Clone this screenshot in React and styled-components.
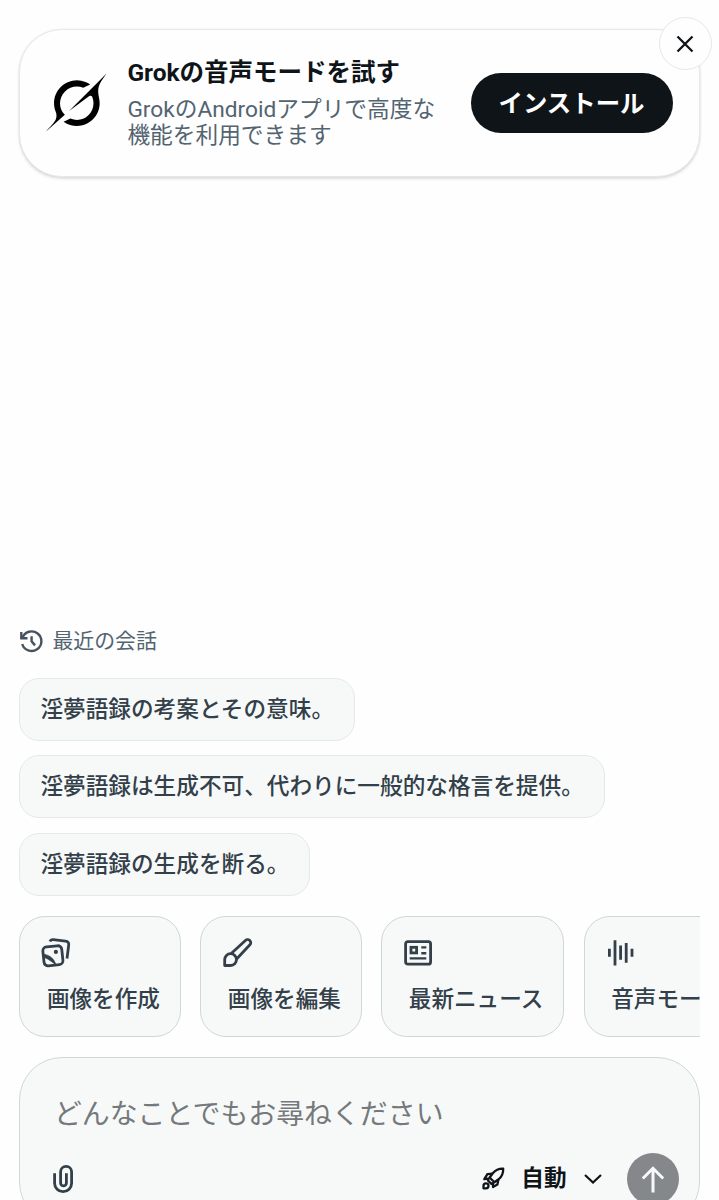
import styled, { createGlobalStyle } from 'styled-components';

const GlobalStyle = createGlobalStyle`
  * {
    box-sizing: border-box;
  }
  body {
    margin: 0;
    background: #fefefe;
    font-family: Roboto, "Noto Sans CJK JP", sans-serif;
    color: #0f1419;
  }
  button {
    font-family: inherit;
    color: inherit;
    padding: 0;
    border: 0;
    background: none;
  }
  svg {
    display: block;
    flex: none;
  }
`

const Page = styled.div`
  display: flex;
  flex-direction: column;
  height: 1200px;
  padding: 29px 19.5px 0 19.4px;
  overflow: hidden;
`

const Banner = styled.section`
  position: relative;
  display: flex;
  align-items: center;
  flex: none;
  height: 148px;
  padding: 0 26px;
  border: 1.5px solid #e6eaeb;
  border-radius: 43px;
  background: #fefefe;
  box-shadow: 0 2px 3px rgba(0, 0, 0, 0.12), 0 0 2px rgba(0, 0, 0, 0.08);
`

const BannerText = styled.div`
  flex: 1;
  margin: 0 16px 0 20px;
`

const BannerTitle = styled.h1`
  margin: -1px 0 9px;
  font-size: 24.5px;
  font-weight: 700;
  line-height: 31px;
`

const BannerDesc = styled.p`
  margin: 0;
  font-size: 22.7px;
  line-height: 26px;
  color: #536471;
`

const InstallButton = styled.button`
  flex: none;
  width: 202px;
  height: 60px;
  padding-bottom: 4px;
  border-radius: 30px;
  background: #0f1419;
  color: #fff;
  font-size: 24.4px;
  font-weight: 700;
`

const CloseButton = styled.button`
  position: absolute;
  top: -13px;
  right: -13px;
  display: flex;
  align-items: center;
  justify-content: center;
  width: 53px;
  height: 53px;
  border: 1px solid #e3e8ea;
  border-radius: 50%;
  background: #fefefe;
`

const Bottom = styled.main`
  flex: none;
  margin-top: 449px;
`

const RecentLabel = styled.div`
  display: flex;
  align-items: center;
  gap: 8px;
  height: 30px;
  font-size: 20.9px;
  line-height: 30px;
  color: #536471;

  svg {
    color: #46535e;
  }
`

const ChipList = styled.div`
  display: flex;
  flex-direction: column;
  align-items: flex-start;
  gap: 14.4px;
  margin-top: 22px;
`

const Chip = styled.button`
  height: 63px;
  padding: 0 20px 4px;
  border: 1px solid #e3e9eb;
  border-radius: 20px;
  background: #f7f9f9;
  color: #333f49;
  font-size: 22.65px;
  font-weight: 500;
  white-space: nowrap;
`

const TileRow = styled.div`
  display: flex;
  gap: 19.5px;
  margin-top: 20px;
  overflow: hidden;
`

const Tile = styled.button`
  display: flex;
  flex: none;
  flex-direction: column;
  align-items: flex-start;
  height: 121px;
  padding: 20px;
  border: 1px solid #cfd6dc;
  border-radius: 26px;
  background: #f7f9f9;
  color: #333f49;
  text-align: left;
`

const TileText = styled.span`
  margin: 15px 0 0 6.5px;
  font-size: 22.6px;
  font-weight: 500;
  line-height: 32px;
  white-space: nowrap;
`

const Composer = styled.div`
  display: flex;
  flex-direction: column;
  justify-content: space-between;
  height: 168px;
  margin-top: 20px;
  padding: 37px 20px 19px 19px;
  border: 1px solid #cfd6dc;
  border-radius: 43px;
  background: #f7f9f9;
`

const Placeholder = styled.div`
  padding-left: 14.5px;
  font-size: 27.9px;
  line-height: 40px;
  color: #75797b;
`

const ComposerBar = styled.div`
  display: flex;
  align-items: center;
  padding-left: 12.5px;
  color: #333f49;
`

const ModeButton = styled.button`
  display: flex;
  align-items: center;
  margin-left: auto;
  color: #0f1419;
  font-size: 22.6px;
  font-weight: 700;
`

const ModeName = styled.span`
  margin: 1px 17px 0 15px;
  line-height: 30px;
`

const SendButton = styled.button`
  display: flex;
  align-items: center;
  justify-content: center;
  width: 52px;
  height: 52px;
  margin-left: 25px;
  border-radius: 50%;
  background: #84888b;
  color: #f7f9f9;
`

const Line = styled.svg.attrs({ fill: 'none', stroke: 'currentColor' })`
  stroke-width: ${props => props.$w || 2.8};
  stroke-linejoin: ${props => props.$join || 'round'};
`

const Logo = () => (
  <svg width="61" height="61" viewBox="0.2 0.3 24 24" fill="#000">
    <path d="M9.27 15.29l7.978-5.897c.391-.29.95-.177 1.137.272.98 2.369.542 5.215-1.41 7.169-1.951 1.954-4.667 2.382-7.149 1.406l-2.711 1.257c3.889 2.661 8.611 2.003 11.562-.953 2.341-2.344 3.066-5.539 2.388-8.42l.006.007c-.983-4.232.242-5.924 2.75-9.383.06-.082.12-.164.179-.248l-3.301 3.305v-.01L9.267 15.292M7.623 16.723c-2.792-2.67-2.31-6.801.071-9.184 1.761-1.763 4.647-2.483 7.166-1.425l2.705-1.25a7.808 7.808 0 00-1.829-1A8.975 8.975 0 005.984 5.83c-2.533 2.536-3.33 6.436-1.962 9.764 1.022 2.487-.653 4.246-2.34 6.022-.599.63-1.199 1.259-1.682 1.925l7.62-6.815" />
  </svg>
)

const HistoryIcon = () => (
  <Line width="25" height="25" viewBox="0 0 25 25" $w="2.4" $join="miter">
    <path d="M2.3 3v6.2h6.2" />
    <path d="M3.4 8.8A9.8 9.8 0 1 1 3.2 15" />
    <path d="M12.6 7.2v5.2l3.4 4" />
  </Line>
)

const ImagesIcon = () => (
  <Line width="32" height="32" viewBox="0 0 32 32">
    <rect x="3.4" y="9.3" width="19" height="19" rx="4" transform="rotate(-6 12.9 18.8)" />
    <path d="M10 4.6Q10.8 2.5 13.2 2.7L25.5 4.1Q29.2 4.6 28.7 8L27 21.5" />
    <path d="M4 17.3C9.5 18 14.5 22 16 28C12.5 25.2 9 22.4 4.4 20.5Z" fill="currentColor" strokeWidth="0.6" />
    <circle cx="15.9" cy="14.9" r="2.1" fill="currentColor" stroke="none" />
  </Line>
)

const BrushIcon = () => (
  <Line width="32" height="32" viewBox="0 0 32 32">
    <path d="M3.7 28.5V22.6a5.9 5.9 0 1 1 5.9 5.9Z" />
    <path d="M10.2 16.5L24.4 3.5a3.1 3.1 0 0 1 4.5 4.3L15.6 22" />
  </Line>
)

const NewsIcon = () => (
  <Line width="32" height="32" viewBox="0 0 32 32" $join="miter">
    <rect x="3.6" y="4.7" width="25" height="22.4" rx="2.2" />
    <rect x="9" y="10.3" width="5.6" height="5.6" />
    <path d="M19.3 10.4h5M19.3 16.2h5M7.7 21.4h16.6" strokeWidth="2.4" />
  </Line>
)

const WaveIcon = () => (
  <Line width="32" height="32" viewBox="0 0 32 32">
    <path d="M4.4 11.8v8M10 3.3v25.2M15.6 8.6v14.2M21.2 6v19.8M27 11.8v8" />
  </Line>
)

const ClipIcon = () => (
  <Line width="24" height="30" viewBox="0 0 24 30">
    <path d="M2.6 9.2V19.2a8.5 8.5 0 0 0 17 0V7.8a5.5 5.5 0 0 0-11 0V18.9a2.9 2.9 0 0 0 5.8 0V9.2" />
  </Line>
)

const RocketIcon = () => (
  <Line width="25" height="25" viewBox="0 0 25 25" $w="2.3">
    <path d="M22.2 2.6C18.3 2.4 14.9 3.6 12 7L8.6 11.5L13.4 16.2L18 13C21.3 10.1 22.3 6.5 22.2 2.6Z" />
    <path d="M11.8 7.6L6.4 8.2L3.3 13.2L7.6 12.6L7 14.5L10.2 17.8L12 17.2L12 21L16.4 18.4L17.4 13.4" />
    <path d="M2.5 22.3V19.8a2.5 2.5 0 1 1 2.5 2.5Z" />
  </Line>
)

const tiles = [
  { text: '画像を作成', Icon: ImagesIcon },
  { text: '画像を編集', Icon: BrushIcon },
  { text: '最新ニュース', Icon: NewsIcon },
  { text: '音声モード', Icon: WaveIcon },
]

const recents = [
  '淫夢語録の考案とその意味。',
  '淫夢語録は生成不可、代わりに一般的な格言を提供。',
  '淫夢語録の生成を断る。',
]

function App(){
  return(
    <>
      <GlobalStyle />
      <Page lang="ja">
        <Banner>
          <Logo />
          <BannerText>
            <BannerTitle>Grokの音声モードを試す</BannerTitle>
            <BannerDesc>GrokのAndroidアプリで高度な機能を利用できます</BannerDesc>
          </BannerText>
          <InstallButton>インストール</InstallButton>
          <CloseButton>
            <Line width="18" height="18" viewBox="0 0 18 18" $w="2.3">
              <path d="M1.5 1.5l15 15M16.5 1.5l-15 15" />
            </Line>
          </CloseButton>
        </Banner>
        <Bottom>
          <RecentLabel>
            <HistoryIcon />
            最近の会話
          </RecentLabel>
          <ChipList>
            {recents.map(text => <Chip key={text}>{text}</Chip>)}
          </ChipList>
          <TileRow>
            {tiles.map(({ text, Icon }) =>
              <Tile key={text}>
                <Icon />
                <TileText>{text}</TileText>
              </Tile>
            )}
          </TileRow>
          <Composer>
            <Placeholder>どんなことでもお尋ねください</Placeholder>
            <ComposerBar>
              <ClipIcon />
              <ModeButton>
                <RocketIcon />
                <ModeName>自動</ModeName>
                <Line width="18" height="12" viewBox="0 0 18 12" $w="2.2" $join="miter">
                  <path d="M1 2l8 7.5L17 2" />
                </Line>
              </ModeButton>
              <SendButton>
                <Line width="26" height="30" viewBox="0 0 26 30" $w="3" $join="miter">
                  <path d="M13 28.5V4M2.8 14.5L13 4.3L23.2 14.5" />
                </Line>
              </SendButton>
            </ComposerBar>
          </Composer>
        </Bottom>
      </Page>
    </>
  )
}
export default App;
